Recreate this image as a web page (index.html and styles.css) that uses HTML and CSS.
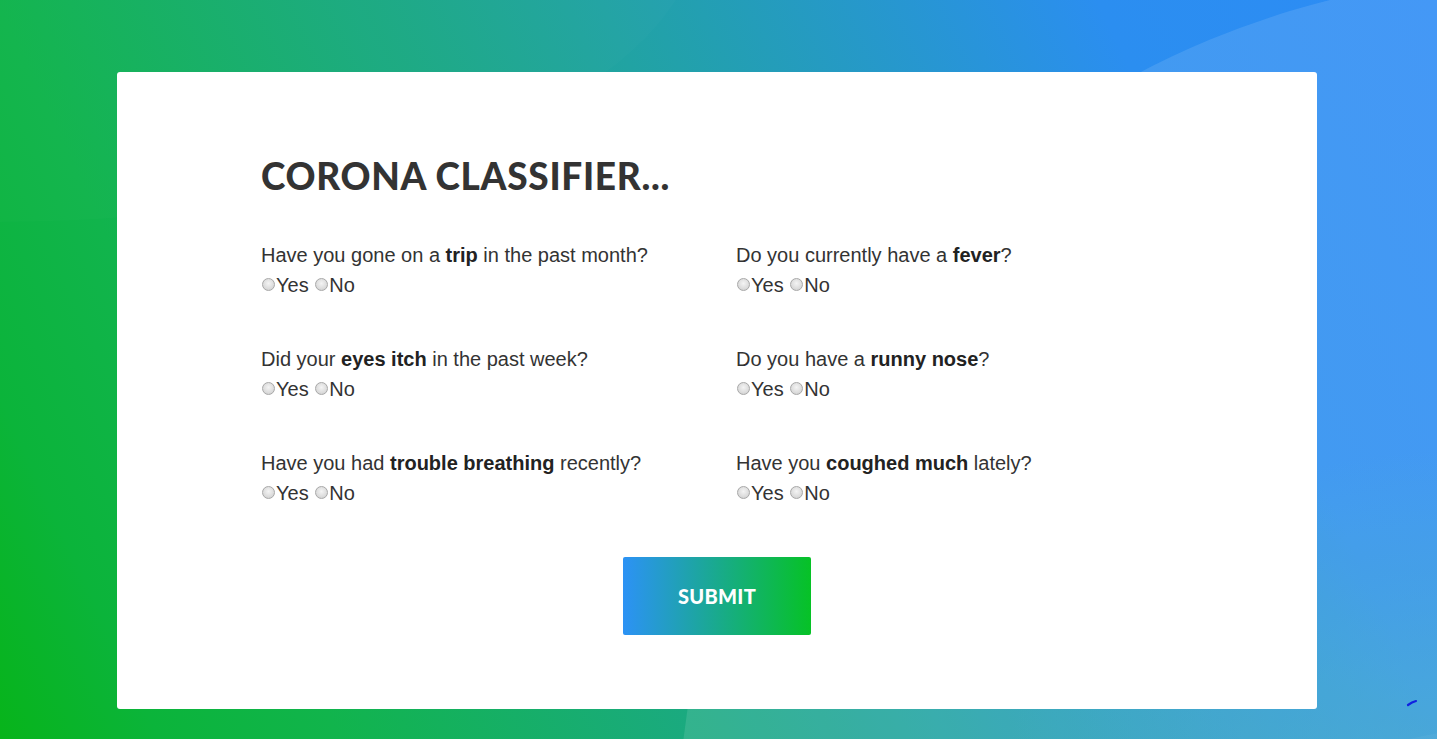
FILE: index.html
```html
<!DOCTYPE html>
<html lang="en">
<head>
<meta charset="utf-8">
<title>Corona Classifier</title>
<link rel="stylesheet" href="styles.css">
</head>
<body>
<div class="bg">
  <div class="blob blob-tl"></div>
  <div class="blob blob-br"></div>
  <div class="blob blob-tr"></div>
  <div class="blob blob-b2"></div>
</div>
<main class="page">
  <form class="card">
    <h1 class="title">CORONA CLASSIFIER...</h1>
    <div class="grid">
      <div class="q">
        <p class="q-text">Have you gone on a <b>trip</b> in the past month?</p>
        <div class="opts"><label><input type="radio" name="q1">Yes</label> <label><input type="radio" name="q1">No</label></div>
      </div>
      <div class="q">
        <p class="q-text">Do you currently have a <b>fever</b>?</p>
        <div class="opts"><label><input type="radio" name="q2">Yes</label> <label><input type="radio" name="q2">No</label></div>
      </div>
      <div class="q">
        <p class="q-text">Did your <b>eyes itch</b> in the past week?</p>
        <div class="opts"><label><input type="radio" name="q3">Yes</label> <label><input type="radio" name="q3">No</label></div>
      </div>
      <div class="q">
        <p class="q-text">Do you have a <b>runny nose</b>?</p>
        <div class="opts"><label><input type="radio" name="q4">Yes</label> <label><input type="radio" name="q4">No</label></div>
      </div>
      <div class="q">
        <p class="q-text">Have you had <b>trouble breathing</b> recently?</p>
        <div class="opts"><label><input type="radio" name="q5">Yes</label> <label><input type="radio" name="q5">No</label></div>
      </div>
      <div class="q">
        <p class="q-text">Have you <b>coughed much</b> lately?</p>
        <div class="opts"><label><input type="radio" name="q6">Yes</label> <label><input type="radio" name="q6">No</label></div>
      </div>
    </div>
    <div class="actions">
      <button type="button" class="submit">SUBMIT</button>
    </div>
  </form>
</main>
<svg class="mark" width="12" height="8" viewBox="0 0 12 8"><path d="M2 6 Q6 3 10 2" stroke="#1020e0" stroke-width="2.2" fill="none" stroke-linecap="round"/></svg>
</body>
</html>
```
FILE: styles.css
```css
html, body {
  margin: 0;
  padding: 0;
  height: 100%;
}
body {
  position: relative;
  overflow: hidden;
  font-family: "Liberation Sans", Arial, sans-serif;
  color: #333;
  background: linear-gradient(65deg, #07b41a 0%, #0bb43a 9%, #11b44c 19%, #21a3a3 53%, #2b8ef0 81%, #2d8cf5 100%);
}
.bg {
  position: absolute;
  inset: 0;
  overflow: hidden;
  z-index: 0;
}
.blob {
  position: absolute;
  border-radius: 50%;
}
.blob-tl {
  width: 1400px;
  height: 600px;
  left: -700px;
  top: -378px;
  background: rgba(255,255,255,0.015);
}
.blob-br {
  width: 900px;
  height: 700px;
  left: 1000px;
  top: 450px;
  background: radial-gradient(closest-side, rgba(60,175,180,0.55), rgba(60,175,180,0));
  border-radius: 0;
}
.blob-tr {
  width: 1724px;
  height: 1724px;
  left: 678px;
  top: -26px;
  background: rgba(255,255,255,0.11);
}
.blob-b2 {
  width: 2000px;
  height: 1000px;
  left: 796px;
  top: 700px;
  background: rgba(255,255,255,0.04);
}
.page {
  position: relative;
  z-index: 1;
  width: 1200px;
  margin: 0 0 0 117px;
  padding-top: 72px;
}
.card {
  display: block;
  box-sizing: border-box;
  width: 1200px;
  height: 637px;
  background: #fff;
  border-radius: 3px;
  padding: 82px 0 0 144px;
}
.title {
  margin: 0 0 43px;
  font-family: "Lato Black", "Lato", "Liberation Sans", sans-serif;
  font-weight: 900;
  font-size: 37px;
  line-height: 44px;
  color: #333;
  letter-spacing: 0.7px;
}
.grid {
  display: grid;
  grid-template-columns: 475px 475px;
  row-gap: 45px;
}
.q-text {
  margin: 0;
  font-size: 20px;
  line-height: 29px;
  color: #333;
}
.q-text b {
  color: #222;
}
.opts {
  font-size: 20px;
  line-height: 29px;
  color: #333;
}
.opts label {
  display: inline-flex;
  align-items: center;
}
.opts input {
  appearance: none;
  -webkit-appearance: none;
  width: 13px;
  height: 13px;
  margin: 0 1px 2px 1px;
  border: 1px solid #a8a8a8;
  border-radius: 50%;
  box-sizing: border-box;
  background: radial-gradient(circle at 50% 40%, #f4f4f4 0%, #dcdcdc 60%, #c8c8c8 100%);
}
.actions {
  display: flex;
  justify-content: center;
  margin-top: 49px;
  margin-left: -144px;
}
.submit {
  width: 188px;
  height: 78px;
  border: 0;
  border-radius: 2px;
  background: linear-gradient(90deg, #2c92f5 0%, #06c226 100%);
  color: #fff;
  font-family: "Lato Black", "Lato", "Liberation Sans", sans-serif;
  font-weight: 900;
  font-size: 20px;
  letter-spacing: 0.3px;
  cursor: pointer;
}
.mark {
  position: absolute;
  left: 1406px;
  top: 699px;
  z-index: 2;
}
```
